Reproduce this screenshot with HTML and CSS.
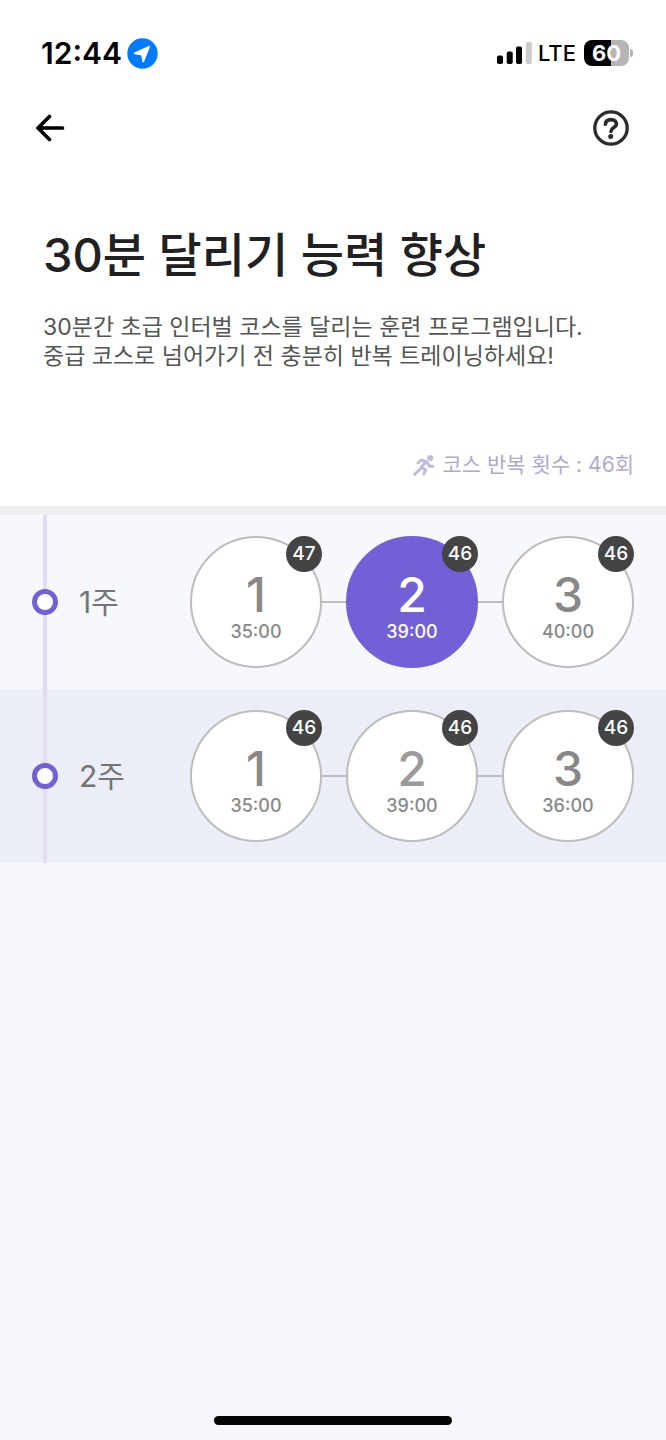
FILE: index.html
```html
<!DOCTYPE html>
<html lang="ko">
<head>
    <meta charset="UTF-8">
    <meta name="viewport" content="width=device-width, initial-scale=1.0">
    <title>30분 달리기 능력 향상</title>
    <link rel="stylesheet" href="styles.css">
</head>
<body>
    <div class="status-bar">
        <span class="clock">12:44</span>
        <svg class="location" width="31" height="31" viewBox="0 0 31 31">
            <circle cx="15.500" cy="15.500" r="15.200" fill="#007aff"/>
            <path d="M22 8.800 L16.200 23.300 L15 16.600 L7.800 15.300 Z" fill="#fff" stroke="#fff" stroke-width="1.800" stroke-linejoin="round"/>
        </svg>
        <svg class="signal" width="36" height="22" viewBox="0 0 36 22">
            <rect x="0" y="13.500" width="6" height="8.500" rx="1.800"/>
            <rect x="9.700" y="9.500" width="6" height="12.500" rx="1.800"/>
            <rect x="19" y="4.500" width="6" height="17.500" rx="1.800"/>
            <rect x="28.800" y="0" width="6" height="22" rx="1.800" fill="#cbcbcb"/>
        </svg>
        <span class="network">LTE</span>
        <div class="battery"><span class="battery-level">60</span></div>
    </div>

    <header class="nav">
        <button class="icon-button" aria-label="뒤로">
            <svg width="30" height="28" viewBox="0 0 30 28" fill="none" stroke="#000" stroke-width="3.700" stroke-linecap="round" stroke-linejoin="round">
                <path d="M27.500 14 H3 M14.500 2.500 L3 14 L14.500 25.500"/>
            </svg>
        </button>
        <button class="icon-button" aria-label="도움말">
            <svg width="36" height="36" viewBox="0 0 36 36" fill="none" stroke="#2b2b2b">
                <circle cx="18" cy="18" r="16.200" stroke-width="3.300"/>
                <path d="M12.400 14.200 C12.700 11.200 15 9.700 18 9.700 C21.400 9.700 23.400 11.500 23.400 14 C23.400 17.700 18.200 17.400 18 21.300" stroke-width="3.700" stroke-linecap="round"/>
                <circle cx="17.700" cy="26.600" r="2.500" fill="#2b2b2b" stroke="none"/>
            </svg>
        </button>
    </header>

    <section class="intro">
        <h1>30분 달리기 능력 향상</h1>
        <p class="description">30분간 초급 인터벌 코스를 달리는 훈련 프로그램입니다.<br>중급 코스로 넘어가기 전 충분히 반복 트레이닝하세요!</p>
        <p class="repeat">
            <svg width="22" height="21" viewBox="0 0 66 63" fill="none" stroke="#c3bbde" stroke-width="9" stroke-linecap="round" stroke-linejoin="round">
                <circle cx="52" cy="9" r="9" fill="#c3bbde" stroke="none"/>
                <path d="M15 24 L25 15 L40 20 L24 37 L38 44 L32 57"/>
                <path d="M42 21 L49 34 L60 34"/>
                <path d="M23 41 L5 58"/>
            </svg>
            <span>코스 반복 횟수 : 46회</span>
        </p>
    </section>

    <main class="weeks">
        <section class="week">
            <span class="dot"></span>
            <h2>1주</h2>
            <div class="days">
                <button class="day"><span class="number">1</span><span class="time">35:00</span><span class="badge">47</span></button>
                <button class="day active"><span class="number">2</span><span class="time">39:00</span><span class="badge">46</span></button>
                <button class="day"><span class="number">3</span><span class="time">40:00</span><span class="badge">46</span></button>
            </div>
        </section>
        <section class="week">
            <span class="dot"></span>
            <h2>2주</h2>
            <div class="days">
                <button class="day"><span class="number">1</span><span class="time">35:00</span><span class="badge">46</span></button>
                <button class="day next"><span class="number">2</span><span class="time">39:00</span><span class="badge">46</span></button>
                <button class="day"><span class="number">3</span><span class="time">36:00</span><span class="badge">46</span></button>
            </div>
        </section>
    </main>

    <div class="home-indicator"></div>
</body>
</html>
```

FILE: styles.css
```css
* {
    box-sizing: border-box;
}
body {
    display: flex;
    flex-direction: column;
    min-height: 100vh;
    margin: 0;
    background-color: #f7f8fc;
    color: #212121;
    font-family: Inter, "Noto Sans CJK KR", sans-serif;
}
h1, h2, p {
    margin: 0;
}
button {
    padding: 0;
    border: none;
    background: none;
    font-family: inherit;
    cursor: pointer;
}
svg {
    display: block;
    flex-shrink: 0;
}

/* status bar */
.status-bar {
    display: flex;
    align-items: center;
    height: 92px;
    padding: 14px 37px 0 41px;
    background-color: #fff;
    color: #000;
}
.clock {
    font-size: 30px;
    font-weight: 600;
}
.location {
    margin-left: 5px;
}
.signal {
    margin-left: auto;
}
.network {
    margin: 0 8px 0 5px;
    font-size: 22px;
    font-weight: 500;
}
.battery {
    position: relative;
    width: 45px;
    height: 26px;
    border-radius: 8px;
    background: linear-gradient(90deg, #000 60%, #b5b5b5 60%);
    color: #fff;
    font-size: 22px;
    font-weight: 700;
    line-height: 26px;
    text-align: center;
}
.battery::after {
    content: "";
    position: absolute;
    top: 9px;
    right: -4px;
    width: 3px;
    height: 8px;
    border-radius: 0 4px 4px 0;
    background-color: #b5b5b5;
}

/* navigation */
.nav {
    display: flex;
    align-items: center;
    justify-content: space-between;
    height: 72px;
    padding: 0 37px 0 35px;
    background-color: #fff;
}

/* course intro */
.intro {
    padding: 57px 32px 27px 43px;
    border-bottom: 9px solid #efefef;
    background-color: #fff;
}
h1 {
    font-size: 47px;
    font-weight: 500;
    line-height: 68px;
}
.description {
    margin-top: 24px;
    color: #555;
    font-size: 23px;
    line-height: 29px;
}
.repeat {
    display: flex;
    align-items: center;
    justify-content: flex-end;
    gap: 7px;
    margin-top: 80px;
    color: #b0a9cf;
    font-size: 21px;
    line-height: 28px;
}

/* weeks */
.weeks {
    position: relative;
}
.weeks::before {
    content: "";
    position: absolute;
    top: 0;
    bottom: 0;
    left: 43px;
    width: 4px;
    background-color: #e1dcf3;
}
.week {
    display: flex;
    align-items: center;
    padding: 21px 32px;
}
.week:nth-child(even) {
    background-color: #ebeef6;
}
.dot {
    position: relative;
    width: 26px;
    height: 26px;
    border: 5px solid #7360d7;
    border-radius: 50%;
    background-color: #fff;
}
h2 {
    padding-bottom: 4px;
    margin-left: 21px;
    color: #757575;
    font-size: 30px;
    font-weight: 400;
}
.days {
    display: flex;
    gap: 24px;
    margin-left: auto;
}
.day {
    position: relative;
    display: flex;
    flex-direction: column;
    align-items: center;
    justify-content: center;
    gap: 1px;
    width: 132px;
    height: 132px;
    padding-top: 11px;
    border: 2px solid #bdbdbd;
    border-radius: 50%;
    background-color: #fff;
    color: #888;
}
/* line to the next day */
.day:not(:last-child)::after {
    content: "";
    position: absolute;
    top: 63px;
    left: 130px;
    width: 24px;
    height: 2px;
    background-color: #bdbdbd;
}
.day.active {
    border-color: #7360d7;
    background-color: #7360d7;
    color: #fff;
}
.next .number {
    color: #9b9b9b;
}
.number {
    font-size: 48px;
    font-weight: 500;
    line-height: 48px;
}
.time {
    font-size: 18px;
    font-weight: 500;
    line-height: 24px;
}
.badge {
    position: absolute;
    top: -2px;
    right: -2px;
    width: 36px;
    height: 36px;
    border-radius: 50%;
    background-color: #444;
    color: #fff;
    font-size: 19px;
    font-weight: 500;
    line-height: 36px;
}

.home-indicator {
    width: 238px;
    height: 9px;
    margin: auto auto 15px;
    border-radius: 5px;
    background-color: #050505;
}
```
